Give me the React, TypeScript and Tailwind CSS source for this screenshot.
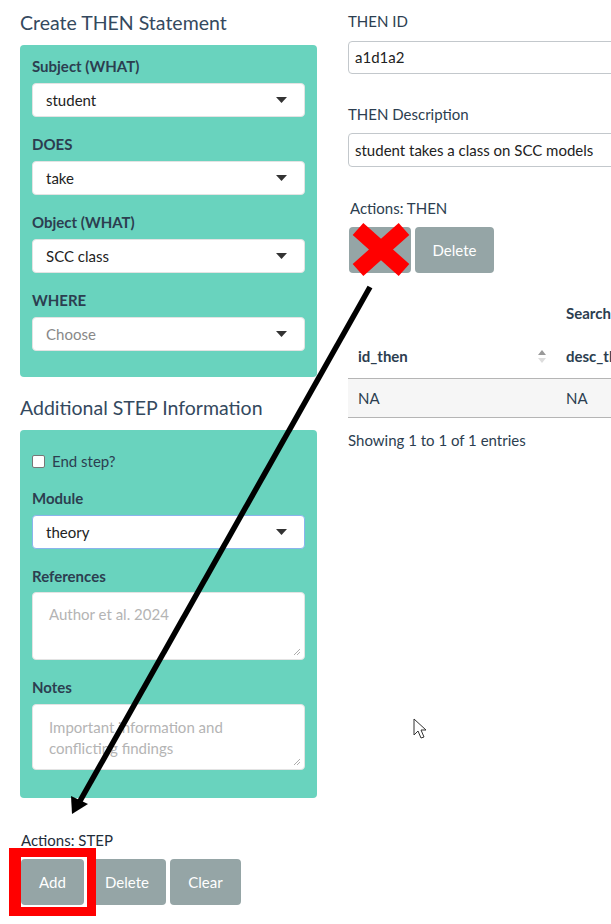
import React from "react";

const teal = "bg-[#69d3be]";

function Caret() {
  return (
    <svg width="11" height="6" viewBox="0 0 11 6" className="shrink-0">
      <polygon points="0,0 11,0 5.5,6" fill="#333" />
    </svg>
  );
}

function SelectBox({ value, placeholder, focus }: { value?: string; placeholder?: string; focus?: boolean }) {
  return (
    <div
      className={`flex items-center justify-between h-[34px] bg-white rounded-[4px] pl-[13px] pr-[17px] border ${
        focus ? "border-[#8ab4ec]" : "border-[#e3e3e3]"
      }`}
    >
      <span className={`text-[15px] ${value ? "text-[#222]" : "text-[#888]"}`}>{value ?? placeholder}</span>
      <Caret />
    </div>
  );
}

function FieldLabel({ children }: { children: React.ReactNode }) {
  return <div className="h-[22px] leading-[22px] text-[15px] font-bold text-[#2c3e50] mb-[6px]">{children}</div>;
}

function GrayButton({ children, w }: { children?: React.ReactNode; w: string }) {
  return (
    <button className={`${w} h-[46px] rounded-[4px] bg-[#95a5a6] text-white text-[15px] flex items-center justify-center`}>
      {children}
    </button>
  );
}

export default function App() {
  const thenFields = [
    { label: "Subject (WHAT)", value: "student" },
    { label: "DOES", value: "take" },
    { label: "Object (WHAT)", value: "SCC class" },
    { label: "WHERE", placeholder: "Choose" },
  ];

  return (
    <div className="relative w-[611px] h-[924px] overflow-hidden bg-white font-[Lato,sans-serif] text-[#2c3e50]">
      <div className="flex">
        {/* Left column */}
        <div className="ml-[20px] w-[297px] shrink-0">
          <h4 className="mt-[12px] h-[22px] leading-[22px] text-[19.5px] text-[#34495e]">Create THEN Statement</h4>
          <div className={`${teal} mt-[11px] rounded-[4px] px-[12px] pt-[10px] pb-[10px]`}>
            {thenFields.map((f) => (
              <div key={f.label} className="mb-[16px]">
                <FieldLabel>{f.label}</FieldLabel>
                <SelectBox value={f.value} placeholder={f.placeholder} />
              </div>
            ))}
          </div>

          <h4 className="mt-[20px] h-[22px] leading-[22px] text-[19.5px] text-[#34495e]">Additional STEP Information</h4>
          <div className={`${teal} mt-[11px] rounded-[4px] px-[12px] pt-[20px] pb-[28px]`}>
            <label className="flex items-center h-[22px] text-[15px] text-[#2c3e50]">
              <span className="w-[13px] h-[13px] bg-white border border-[#777] rounded-[2px] mr-[7px]" />
              End step?
            </label>
            <div className="mt-[15px]">
              <FieldLabel>Module</FieldLabel>
              <SelectBox value="theory" focus />
            </div>
            <div className="mt-[16px]">
              <div className="h-[22px] leading-[22px] text-[15px] font-bold mb-[5px]">References</div>
              <div className="relative h-[68px] bg-white rounded-[4px] border border-[#e3e3e3] px-[16px] pt-[11px] text-[15px] leading-[21px] text-[#b4b4b4]">
                Author et al. 2024
                <Grip />
              </div>
            </div>
            <div className="mt-[16px]">
              <FieldLabel>Notes</FieldLabel>
              <div className="relative h-[66px] bg-white rounded-[4px] border border-[#e3e3e3] px-[16px] pt-[12px] text-[15px] leading-[21px] text-[#b4b4b4]">
                Important information and
                <br />
                conflicting findings
                <Grip />
              </div>
            </div>
          </div>

          <div className="mt-[31px] ml-[1px] h-[22px] leading-[22px] text-[15px] text-[#1f2d3a]">Actions: STEP</div>
          <div className="mt-[8px] ml-[1px] flex gap-[4px]">
            <GrayButton w="w-[63px]">Add</GrayButton>
            <GrayButton w="w-[78px]">Delete</GrayButton>
            <GrayButton w="w-[71px]">Clear</GrayButton>
          </div>
        </div>

        {/* Right column */}
        <div className="ml-[31px] w-[320px] shrink-0">
          <div className="mt-[10px] h-[22px] leading-[22px] text-[15px]">THEN ID</div>
          <div className="mt-[9px] h-[33px] border border-[#c3c8cc] rounded-[4px] flex items-center pl-[6px] text-[15px] text-[#222]">
            a1d1a2
          </div>
          <div className="mt-[29px] h-[22px] leading-[22px] text-[15px]">THEN Description</div>
          <div className="mt-[8px] h-[34px] border border-[#c3c8cc] rounded-[4px] flex items-center pl-[6px] text-[15px] text-[#222]">
            student takes a class on SCC models
          </div>
          <div className="mt-[30px] ml-[2px] h-[22px] leading-[22px] text-[15px]">Actions: THEN</div>
          <div className="mt-[8px] ml-[1px] flex gap-[4px]">
            <GrayButton w="w-[62px]" />
            <GrayButton w="w-[79px]">Delete</GrayButton>
          </div>

          <div className="mt-[29px] ml-[218px] h-[22px] leading-[22px] text-[15px] font-bold whitespace-nowrap">Search:</div>
          <div className="mt-[11px] flex border-b border-[#b5b5b5] h-[44px] items-center text-[15px] font-bold">
            <div className="w-[208px] pl-[10px] flex items-center justify-between pr-[10px]">
              <span>id_then</span>
              <svg width="8" height="13" viewBox="0 0 8 13">
                <polygon points="4,0 8,5 0,5" fill="#999" />
                <polygon points="0,8 8,8 4,13" fill="#ddd" />
              </svg>
            </div>
            <div className="pl-[10px]">desc_then</div>
          </div>
          <div className="flex bg-[#f6f6f6] border-b border-[#b5b5b5] h-[39px] items-center text-[15px]">
            <div className="w-[208px] pl-[10px]">NA</div>
            <div className="pl-[10px]">NA</div>
          </div>
          <div className="mt-[11px] h-[22px] leading-[22px] text-[15px]">Showing 1 to 1 of 1 entries</div>
        </div>
      </div>

      {/* Annotations drawn over the screenshot */}
      <svg className="absolute left-0 top-0 pointer-events-none" width="611" height="924">
        <line x1="358" y1="229" x2="404" y2="270" stroke="#ff0000" strokeWidth="16" />
        <line x1="404" y1="229" x2="358" y2="270" stroke="#ff0000" strokeWidth="16" />
        <line x1="370" y1="287" x2="80" y2="801" stroke="#000" strokeWidth="5.5" />
        <polygon points="72,814 71,796 88,804" fill="#000" />
        <polygon
          points="414,719 414,735 418,731 421,738 424,737 421,730 426,730"
          fill="#fff"
          stroke="#333"
          strokeWidth="1"
        />
      </svg>
      <div className="absolute left-[9px] top-[848px] w-[87px] h-[68px] border-[9px] border-l-[12px] border-[#ff0000]" />
    </div>
  );
}

function Grip() {
  return (
    <svg className="absolute right-[3px] bottom-[3px]" width="8" height="8" viewBox="0 0 8 8">
      <line x1="1" y1="7" x2="7" y2="1" stroke="#999" strokeWidth="0.8" />
      <line x1="4" y1="7" x2="7" y2="4" stroke="#999" strokeWidth="0.8" />
    </svg>
  );
}
